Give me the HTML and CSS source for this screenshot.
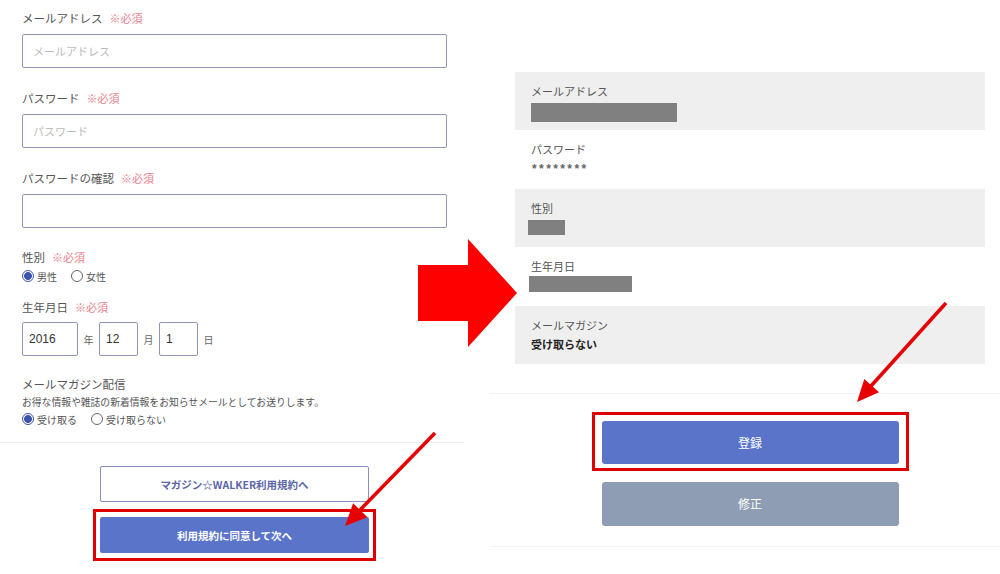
FILE: index.html
```html
<html>

<head>
    <title>会員登録</title>
    <link rel="stylesheet" href="styles.css">
</head>

<body>
    <div class="page">
        <div class="col-form">
            <div class="fields">
                <label class="field">
                    <span class="caption">メールアドレス<em>※必須</em></span>
                    <input class="text" placeholder="メールアドレス">
                </label>
                <label class="field">
                    <span class="caption">パスワード<em>※必須</em></span>
                    <input class="text" type="password" placeholder="パスワード">
                </label>
                <label class="field">
                    <span class="caption">パスワードの確認<em>※必須</em></span>
                    <input class="text" type="password">
                </label>
                <div class="field gender">
                    <span class="caption">性別<em>※必須</em></span>
                    <div class="choices">
                        <label><input type="radio" name="sex" checked><span>男性</span></label>
                        <label><input type="radio" name="sex"><span>女性</span></label>
                    </div>
                </div>
                <div class="field birth">
                    <span class="caption">生年月日<em>※必須</em></span>
                    <div class="date">
                        <input class="year" value="2016"><span>年</span>
                        <input class="num" value="12"><span>月</span>
                        <input class="num" value="1"><span>日</span>
                    </div>
                </div>
                <div class="field magazine">
                    <span class="caption">メールマガジン配信</span>
                    <p class="note">お得な情報や雑誌の新着情報をお知らせメールとしてお送りします。</p>
                    <div class="choices">
                        <label><input type="radio" name="mag" checked><span>受け取る</span></label>
                        <label><input type="radio" name="mag"><span>受け取らない</span></label>
                    </div>
                </div>
            </div>
            <div class="actions">
                <button class="terms">マガジン☆WALKER利用規約へ</button>
                <div class="highlight small">
                    <button class="agree">利用規約に同意して次へ</button>
                </div>
            </div>
        </div>

        <div class="col-confirm">
            <div class="summary">
                <div class="row">
                    <span class="key">メールアドレス</span>
                    <span class="mask mail"></span>
                </div>
                <div class="row">
                    <span class="key">パスワード</span>
                    <span class="stars">********</span>
                </div>
                <div class="row">
                    <span class="key">性別</span>
                    <span class="mask sex"></span>
                </div>
                <div class="row">
                    <span class="key">生年月日</span>
                    <span class="mask birthday"></span>
                </div>
                <div class="row">
                    <span class="key">メールマガジン</span>
                    <span class="value">受け取らない</span>
                </div>
            </div>
            <div class="confirm-actions">
                <div class="highlight large">
                    <button class="register">登録</button>
                </div>
                <button class="fix">修正</button>
            </div>
        </div>

        <!-- annotation arrows drawn over the screenshots -->
        <svg class="marks" width="1000" height="574" viewBox="0 0 1000 574">
            <polygon points="418,265 468,265 468,239 517,293 468,347 468,321 418,321" fill="#ff0000" />
            <line x1="435" y1="433" x2="360" y2="510" stroke="#e60000" stroke-width="3.5" />
            <polygon points="345,526 367.5,517.2 353.1,503.3" fill="#e60000" />
            <line x1="946" y1="303" x2="871" y2="386" stroke="#e60000" stroke-width="3.5" />
            <polygon points="857,402 879.1,392.3 864.3,378.9" fill="#e60000" />
        </svg>
    </div>
</body>

</html>
```

FILE: styles.css
```css
body {
    margin: 0;
    background: #fff;
    font-family: "Noto Sans CJK JP", "Noto Sans", sans-serif;
    color: #555;
}

.page {
    position: relative;
    width: 1000px;
    height: 574px;
    display: grid;
    grid-template-columns: 470px 510px;
    column-gap: 20px;
    overflow: hidden;
}

/* left: entry form */

.fields {
    padding: 8px 23px 0 22px;
    display: flex;
    flex-direction: column;
}

.field {
    display: flex;
    flex-direction: column;
}

.field + .field {
    margin-top: 20px;
}

.caption {
    font-size: 11.5px;
    line-height: 20px;
    height: 20px;
    margin-bottom: 6px;
    color: #555;
}

.caption em {
    font-style: normal;
    font-size: 11px;
    color: #e8818c;
    margin-left: 7px;
}

.text {
    height: 34px;
    box-sizing: border-box;
    border: 1px solid #9295b6;
    border-radius: 2px;
    padding: 0 10px;
    font-family: inherit;
    font-size: 11px;
    outline: none;
}

.text::placeholder {
    color: #bbb;
}

.gender .caption,
.birth .caption,
.magazine .caption {
    line-height: 18px;
    height: 18px;
    margin-bottom: 0;
}

.birth {
    margin-top: 12px !important;
}

.birth .caption {
    margin-bottom: 6px;
}

.magazine {
    margin-top: 19px !important;
}

.choices {
    display: flex;
    gap: 14px;
    height: 20px;
    align-items: center;
    font-size: 10px;
    color: #555;
}

.choices label {
    display: flex;
    align-items: center;
    gap: 3px;
}

.choices input {
    appearance: none;
    margin: 0;
    width: 12px;
    height: 12px;
    border: 1px solid #666;
    border-radius: 50%;
    background: #fff;
}

.choices input:checked {
    border-color: #3c54ae;
    background: radial-gradient(circle, #3c54ae 0 3.6px, #fff 4.2px);
}

.magazine .choices {
    height: 16px;
}

.note {
    margin: 0;
    font-size: 9.8px;
    line-height: 18px;
    color: #555;
    white-space: nowrap;
}

.date {
    display: flex;
    align-items: center;
    font-size: 10px;
    color: #666;
}

.date input {
    height: 34px;
    box-sizing: border-box;
    border: 1px solid #9295b6;
    border-radius: 2px;
    padding: 0 0 0 6px;
    font-family: "Liberation Sans", sans-serif;
    font-size: 12px;
    color: #333;
    outline: none;
}

.date .year {
    width: 56px;
}

.date .num {
    width: 39px;
}

.date span {
    width: 21px;
    text-align: center;
}

.actions {
    margin-top: 15px;
    margin-right: 5px;
    padding-left: 4px;
    border-top: 1px solid #f1f1f1;
    padding-top: 23px;
    display: flex;
    flex-direction: column;
    align-items: center;
}

.actions button {
    width: 269px;
    height: 36px;
    box-sizing: border-box;
    font-family: inherit;
    font-size: 10.5px;
    font-weight: bold;
    border-radius: 2px;
}

.terms {
    background: #fff;
    border: 1px solid #8a8fbf;
    color: #5b66a6;
}

.agree {
    display: block;
    background: #5a74c9;
    border: none;
    color: #fff;
}

/* red frame drawn round the button to press */
.highlight {
    border: 3px solid #e00000;
}

.highlight.small {
    margin-top: 7px;
    padding: 5px 4px;
}

.highlight.large {
    padding: 6px 7px 4px;
}

/* right: confirmation */

.summary {
    margin: 72px 15px 0 25px;
    background: #efefef;
}

.row {
    height: 58.4px;
    box-sizing: border-box;
    padding: 10px 16px 0;
    display: flex;
    flex-direction: column;
}

.row:nth-child(even) {
    background: #fff;
}

.key {
    font-size: 11px;
    line-height: 18px;
    color: #555;
}

.value {
    font-size: 11px;
    line-height: 20px;
    font-weight: bold;
    color: #222;
}

.stars {
    font-family: "Liberation Sans", sans-serif;
    font-size: 12px;
    font-weight: bold;
    line-height: 22px;
    letter-spacing: 2.4px;
    color: #666;
    margin-left: 1px;
}

.mask {
    display: block;
    background: #808080;
}

.mask.mail {
    margin-top: 3px;
    width: 146px;
    height: 19px;
}

.mask.sex {
    margin-top: 3px;
    margin-left: -3px;
    width: 37px;
    height: 15px;
}

.mask.birthday {
    margin-top: 1px;
    margin-left: -2px;
    width: 103px;
    height: 16px;
}

.confirm-actions {
    margin-top: 29px;
    border-top: 1px solid #f3f3f3;
    border-bottom: 1px solid #f3f3f3;
    padding: 18px 15px 20px 25px;
    display: flex;
    flex-direction: column;
    align-items: center;
}

.confirm-actions button {
    display: block;
    width: 297px;
    height: 43px;
    border: none;
    border-radius: 3px;
    font-family: inherit;
    font-size: 12px;
    color: #fff;
}

.register {
    background: #5a74c9;
}

.fix {
    margin-top: 11px;
    height: 44px !important;
    background: #8e9db3;
}

.marks {
    position: absolute;
    top: 0;
    left: 0;
    pointer-events: none;
}
```
